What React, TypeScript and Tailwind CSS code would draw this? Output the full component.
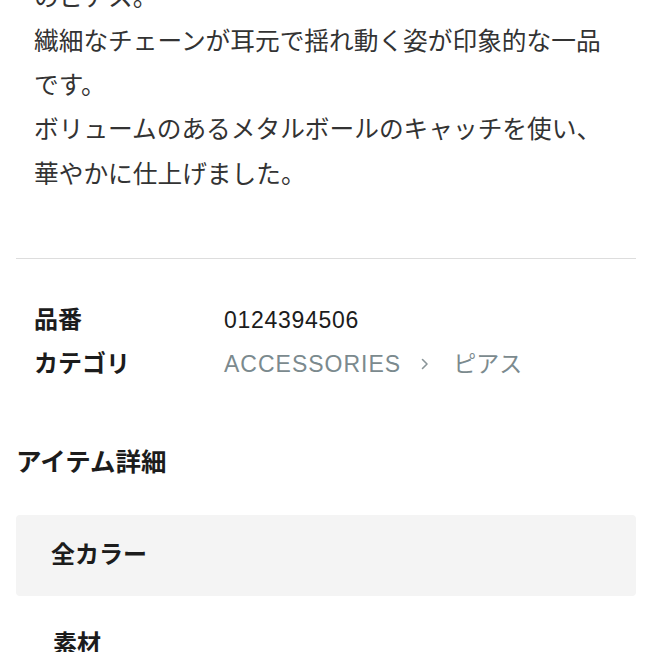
import React from "react";

const jp = "font-['Liberation_Sans','Noto_Sans_CJK_JP',sans-serif]";

function SpecRow({ label, children }: { label: string; children: React.ReactNode }) {
  return (
    <div className="flex h-[44px] items-center">
      <div className="w-[190px] shrink-0 text-[24px] font-bold text-[#1c1c1c]">{label}</div>
      <div className="flex items-center">{children}</div>
    </div>
  );
}

export default function App() {
  return (
    <div className={`h-[652px] w-[652px] overflow-hidden bg-white ${jp}`}>
      <div className="px-4">
        <p className="-mt-[24.5px] whitespace-nowrap px-[18px] text-[24.7px] leading-[44.3px] text-[#333]">
          のピアス。
          <br />
          繊細なチェーンが耳元で揺れ動く姿が印象的な一品
          <br />
          です。
          <br />
          ボリュームのあるメタルボールのキャッチを使い、
          <br />
          華やかに仕上げました。
        </p>

        <div className="mt-[61px] h-px bg-[#dddddd]" />

        <div className="mt-[39px] px-[18px]">
          <SpecRow label="品番">
            <span className="text-[23px] tracking-[0.7px] text-[#1c1c1c]">0124394506</span>
          </SpecRow>
          <SpecRow label="カテゴリ">
            <span className="text-[23px] tracking-[1px] text-[#7b8a8e]">ACCESSORIES</span>
            <svg className="ml-[20px] mr-[24px]" width="8" height="12" viewBox="0 0 8 12" fill="none">
              <path d="M1.5 1.5 L6 6 L1.5 10.5" stroke="#8a9599" strokeWidth="1.6" strokeLinecap="round" strokeLinejoin="round" />
            </svg>
            <span className="text-[23px] text-[#7b8a8e]">ピアス</span>
          </SpecRow>
        </div>

        <h2 className="mt-[56px] flex h-[40px] items-center text-[25.5px] font-semibold text-[#1c1c1c]">
          アイテム詳細
        </h2>

        <div className="mt-[33px] flex h-[81px] items-center rounded-[4px] bg-[#f4f4f4] px-[35px]">
          <span className="text-[24px] font-bold text-[#1c1c1c]">全カラー</span>
        </div>

        <div className="mt-2 flex h-[81px] items-center px-[37px]">
          <span className="text-[24px] font-bold text-[#1c1c1c]">素材</span>
        </div>
      </div>
    </div>
  );
}
